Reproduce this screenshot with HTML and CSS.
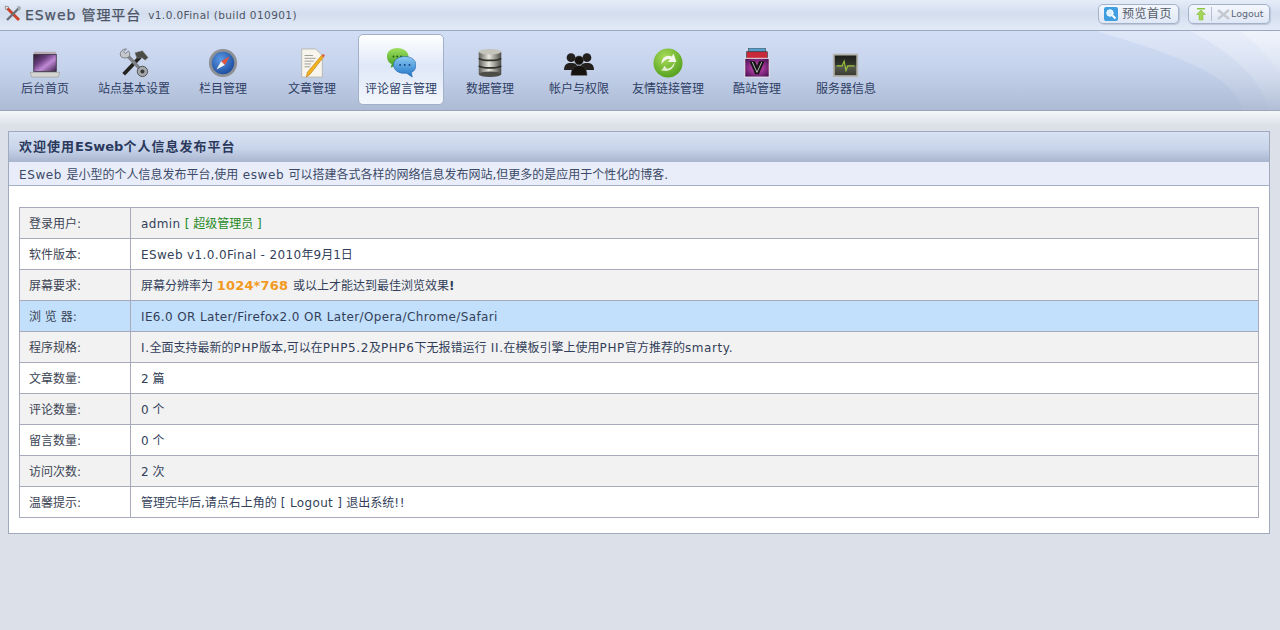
FILE: index.html
```html
<!DOCTYPE html>
<html lang="zh-CN">
<head>
<meta charset="utf-8">
<title>ESweb 管理平台</title>
<link rel="stylesheet" href="styles.css">
</head>
<body>
<svg class="defs" width="0" height="0" aria-hidden="true">
  <defs>
    <linearGradient id="gScreen" x1="0" y1="0" x2="1" y2="1"><stop offset="0" stop-color="#2c1c34"/><stop offset=".35" stop-color="#6c3f82"/><stop offset=".6" stop-color="#c08ad6"/><stop offset="1" stop-color="#3c2046"/></linearGradient>
    <linearGradient id="gGreen" x1="0" y1="0" x2="0" y2="1"><stop offset="0" stop-color="#9fe060"/><stop offset="1" stop-color="#3f9a20"/></linearGradient>
    <linearGradient id="gBlue" x1="0" y1="0" x2="0" y2="1"><stop offset="0" stop-color="#8ccaf2"/><stop offset="1" stop-color="#1f73c8"/></linearGradient>
    <linearGradient id="gDisk" x1="0" y1="0" x2="1" y2="0"><stop offset="0" stop-color="#5f5f5a"/><stop offset=".45" stop-color="#e8e8de"/><stop offset="1" stop-color="#4c4c47"/></linearGradient>
    <linearGradient id="gSwoosh" x1="0" y1="0" x2="0" y2="1"><stop offset="0" stop-color="#fff" stop-opacity=".3"/><stop offset="1" stop-color="#fff" stop-opacity=".02"/></linearGradient>
    <linearGradient id="gMonitor" x1="0" y1="0" x2="0" y2="1"><stop offset="0" stop-color="#1c1e1a"/><stop offset=".5" stop-color="#34382e"/><stop offset=".52" stop-color="#5a5e50"/><stop offset="1" stop-color="#3a3c34"/></linearGradient>
    <radialGradient id="gCompass" cx=".4" cy=".35" r=".7"><stop offset="0" stop-color="#5a9ae6"/><stop offset="1" stop-color="#1c4a9c"/></radialGradient>
    <radialGradient id="gLink" cx=".4" cy=".3" r=".8"><stop offset="0" stop-color="#a8dc58"/><stop offset="1" stop-color="#4b9a18"/></radialGradient>
    <radialGradient id="gCool" cx=".5" cy=".5" r=".65"><stop offset="0" stop-color="#e050c8"/><stop offset="1" stop-color="#45104f"/></radialGradient>
  </defs>
</svg>
<header class="topbar">
  <div class="brand">
    <svg class="logo" width="20" height="20" viewBox="0 0 20 20"><path d="M3 3l13 13" stroke="#c8442c" stroke-width="3"/><path d="M17 3L4 16" stroke="#6a7078" stroke-width="2.4"/><path d="M2 2l4 1-3 3z" fill="#e8e8e8" stroke="#777" stroke-width=".6"/><path d="M14 2l4 1-1 4-2-2z" fill="#aab0b8"/></svg>
    <span class="brand-name">ESweb 管理平台</span>
    <span class="brand-ver">v1.0.0Final (build 010901)</span>
  </div>
  <div class="top-actions">
    <a class="pill pill-preview">
      <svg width="14" height="14" viewBox="0 0 14 14"><rect width="14" height="14" rx="2" fill="#3f9fe0"/><circle cx="6" cy="6" r="3.2" fill="#d8f0ff" stroke="#fff"/><path d="M8.5 8.5l3 3" stroke="#fff" stroke-width="2"/></svg>
      <span>预览首页</span>
    </a>
    <a class="pill pill-logout">
      <svg width="10" height="14" viewBox="0 0 10 14"><path d="M1 1h8v1.500H1z" fill="#8cc63f"/><path d="M5 3l4.500 4.500H7V13H3V7.500H.5z" fill="#a5d65a" stroke="#7cb030" stroke-width=".5"/></svg>
      <i class="pill-sep"></i>
      <svg width="13" height="11" viewBox="0 0 13 11"><path d="M1 1l11 9M12 1L1 10" stroke="#c4c9d0" stroke-width="2.400"/></svg>
      <span class="logout-text">Logout</span>
    </a>
  </div>
</header>
<nav class="nav">
  <svg class="swoosh" width="240" height="80" viewBox="0 0 240 80" preserveAspectRatio="none">
    <path d="M57 0C120 20 195 40 203 80H240V0z" fill="url(#gSwoosh)"/>
    <path d="M150 0C190 20 225 50 228 80H240V0z" fill="url(#gSwoosh)"/>
    <path d="M200 0C215 12 235 30 240 45V0z" fill="url(#gSwoosh)"/>
  </svg>
  <a class="nav-item">
    <svg class="nav-icon" viewBox="0 0 32 32"><path d="M4 4h24v3H4z" fill="#b8a8b4"/><rect x="4" y="7" width="24" height="18" fill="url(#gScreen)" stroke="#2c2630" stroke-width=".8"/><path d="M0 26h32l-2 5H2z" fill="#d4d4d0" stroke="#8c8c88" stroke-width=".5"/></svg>
    <span>后台首页</span>
  </a>
  <a class="nav-item">
    <svg class="nav-icon" viewBox="0 0 32 32"><path d="M23 9L5 28" stroke="#22221f" stroke-width="4"/><path d="M17 5l8-2 6 7-3 3-4-3-5 1z" fill="#4a4a46" stroke="#8a8a84" stroke-width=".5"/><path d="M9 8l17 18" stroke="#7e8288" stroke-width="3.600"/><path d="M8 1C3 1 0 5 2 9c2 2 5 2 8 1 2-2 2-5 0-7L7 6 5 4z" fill="#c4c8cc" stroke="#5c5c5c" stroke-width=".7"/><circle cx="25" cy="25" r="5.500" fill="#a4a8ac" stroke="#4c4c4c"/><circle cx="25" cy="25" r="2.200" fill="#3a3a3a"/></svg>
    <span>站点基本设置</span>
  </a>
  <a class="nav-item">
    <svg class="nav-icon" viewBox="0 0 32 32"><circle cx="16" cy="16" r="15" fill="#8d9094"/><circle cx="16" cy="16" r="12" fill="url(#gCompass)"/><path d="M23 9l-9 5 4 4z" fill="#e8523a"/><path d="M9 23l9-5-4-4z" fill="#f2f2f2"/></svg>
    <span>栏目管理</span>
  </a>
  <a class="nav-item">
    <svg class="nav-icon" viewBox="0 0 32 32"><path d="M5 1h15l7 7v23H5z" fill="#f7f5ec" stroke="#b8b8ae"/><path d="M8 8h9M8 11h12M8 14h10M8 17h7M8 20h6" stroke="#9a9a92"/><path d="M28 10L14 28l-4 3 1-5L26 8z" fill="#f2b21f" stroke="#b4720c" stroke-width=".6"/><path d="M26 8l2 2 2-2-2-2z" fill="#d86a4a"/></svg>
    <span>文章管理</span>
  </a>
  <a class="nav-item is-active">
    <svg class="nav-icon" viewBox="0 0 32 32"><path d="M12 0C5 0 1 4 1 9c0 4 2 7 5 8l-1 4 6-3h3c6 0 10-4 10-9s-5-9-12-9z" fill="url(#gGreen)"/><circle cx="8" cy="9" r="1" fill="#1f5c10"/><circle cx="12" cy="9" r="1" fill="#1f5c10"/><circle cx="16" cy="9" r="1" fill="#1f5c10"/><path d="M20 9c-7 0-12 4-12 9s5 9 11 9h3l6 4-1-5c3-1 5-4 5-8 0-5-5-9-12-9z" fill="url(#gBlue)" stroke="#1d5fa8" stroke-width=".6"/><circle cx="15" cy="18" r="1" fill="#0e3d78"/><circle cx="20" cy="18" r="1" fill="#0e3d78"/><circle cx="25" cy="18" r="1" fill="#0e3d78"/></svg>
    <span>评论留言管理</span>
  </a>
  <a class="nav-item">
    <svg class="nav-icon" viewBox="0 0 32 32"><rect x="4" y="4" width="24" height="24" fill="url(#gDisk)"/><ellipse cx="16" cy="4" rx="12" ry="3" fill="#c4c4ba"/><path d="M4 11c4 3 20 3 24 0M4 19c4 3 20 3 24 0" stroke="#30302c" stroke-width="1.800" fill="none"/><ellipse cx="16" cy="28" rx="12" ry="3" fill="#4e4e48"/></svg>
    <span>数据管理</span>
  </a>
  <a class="nav-item">
    <svg class="nav-icon" viewBox="0 0 34 32"><g fill="#23201e"><circle cx="8" cy="10" r="5"/><path d="M0 24c0-6 3-8 8-8s8 2 8 8z"/><circle cx="26" cy="10" r="5"/><path d="M18 24c0-6 3-8 8-8s8 2 8 8z"/></g><g fill="#151210" stroke="#4a4642" stroke-width=".6"><circle cx="17" cy="13" r="5"/><path d="M8 30c0-8 4-11 9-11s9 3 9 11z"/></g></svg>
    <span>帐户与权限</span>
  </a>
  <a class="nav-item">
    <svg class="nav-icon" viewBox="0 0 32 32"><circle cx="16" cy="16" r="15.500" fill="url(#gLink)"/><path d="M9 17C9 10 15 7 20 9l2-3 3 9-9 0 2-3c-4-1-6 2-9 5z" fill="#f4f8ea"/><path d="M23 15c0 7-6 11-13 9l-2 0 0 0c2-1 3-2 4-5l3 3c4 0 6-3 8-7z" fill="#e4eed4"/></svg>
    <span>友情链接管理</span>
  </a>
  <a class="nav-item">
    <svg class="nav-icon" viewBox="0 0 32 32"><rect x="7" y="0" width="18" height="6" fill="#5a9ec8" stroke="#333" stroke-width=".6"/><rect x="5" y="4" width="22" height="8" fill="#c82a3a" stroke="#222" stroke-width=".6"/><rect x="3" y="11" width="26" height="20" fill="url(#gCool)" stroke="#f0f0f0"/><path d="M8 14h6l2 5 2-5h6l-6 14h-4z" fill="#151515"/><path d="M11 15l5 11 5-11" fill="none" stroke="#e8e8e8" stroke-width=".8"/></svg>
    <span>酷站管理</span>
  </a>
  <a class="nav-item">
    <svg class="nav-icon" viewBox="0 0 32 32"><rect x="2" y="6" width="27" height="25" fill="#b4b4ac"/><rect x="4" y="8" width="23" height="21" fill="url(#gMonitor)"/><path d="M6 19h6l2-5 2 10 2-5h7" fill="none" stroke="#9ac43a" stroke-width="1.200"/></svg>
    <span>服务器信息</span>
  </a>
</nav>
<div class="nav-shadow"></div>
<main class="panel">
  <h1 class="panel-title">欢迎使用<span class="title-en">ESweb</span>个人信息发布平台</h1>
  <p class="panel-sub"><span class="en-wide">ESweb </span>是小型的个人信息发布平台,使用<span class="en-wide"> esweb </span>可以搭建各式各样的网络信息发布网站,但更多的是应用于个性化的博客.</p>
  <div class="panel-body">
    <table class="info">
      <tr><th>登录用户:</th><td><span class="en">admin </span><span class="green">[ 超级管理员 ]</span></td></tr>
      <tr><th>软件版本:</th><td><span class="en">ESweb v1.0.0Final - 2010</span>年9月1日</td></tr>
      <tr><th>屏幕要求:</th><td>屏幕分辨率为 <b class="orange">1024*768</b> 或以上才能达到最佳浏览效果<b>!</b></td></tr>
      <tr class="hover"><th>浏 览 器:</th><td><span class="en">IE6.0 OR Later/Firefox2.0 OR Later/Opera/Chrome/Safari</span></td></tr>
      <tr><th>程序规格:</th><td><span class="en-wide">I.</span>全面支持最新的<span class="en-wide">PHP</span>版本,可以在<span class="en-wide">PHP5.2</span>及<span class="en-wide">PHP6</span>下无报错运行<span class="en-wide"> II.</span>在模板引擎上使用<span class="en-wide">PHP</span>官方推荐的<span class="en-wide">smarty.</span></td></tr>
      <tr><th>文章数量:</th><td>2 篇</td></tr>
      <tr><th>评论数量:</th><td>0 个</td></tr>
      <tr><th>留言数量:</th><td>0 个</td></tr>
      <tr><th>访问次数:</th><td>2 次</td></tr>
      <tr><th>温馨提示:</th><td>管理完毕后,请点右上角的 <span class="en">[ Logout ]</span> 退出系统<span class="en-wide">!!</span></td></tr>
    </table>
  </div>
</main>
</body>
</html>
```
FILE: styles.css
```css
* { box-sizing: border-box; }
html, body { margin: 0; padding: 0; }
body {
  height: 630px;
  overflow: hidden;
  background: #dbe0e9;
  color: #2e3d5c;
  font: 12px/18px "DejaVu Sans", "Noto Sans CJK SC", sans-serif;
}
.defs { position: absolute; }
.topbar {
  height: 31px;
  display: flex;
  justify-content: space-between;
  align-items: flex-start;
  padding: 4px 10px 0 3px;
  background: linear-gradient(#e5edf9 0, #d3dded 45%, #e3ebf8 100%);
  border-bottom: 1px solid #9aa6bd;
}
.brand { display: flex; align-items: center; height: 22px; }
.logo { margin: -2px 2px 0 0; }
.brand-name {
  font-size: 14px;
  color: #4c5566;
  letter-spacing: .9px;
  -webkit-text-stroke: .25px #4c5566;
}
.brand-ver { font-size: 10.500px; color: #4c5566; margin-left: 7px; letter-spacing: .42px; }
.top-actions { display: flex; gap: 9px; }
.pill {
  height: 20px;
  display: flex;
  align-items: center;
  border: 1px solid #a3b1c9;
  border-radius: 5px;
  background: linear-gradient(#f4f7fd, #dfe7f5);
  box-shadow: 1px 1px 1px #bcc6d6;
  color: #555c68;
}
.pill-preview { width: 81px; padding-left: 5px; gap: 4px; letter-spacing: .5px; }
.pill-logout { width: 82px; padding-left: 7px; }
.pill-sep { width: 1px; height: 14px; background: #b6c0d0; margin: 0 5px; }
.logout-text { font: 9.500px/1 "DejaVu Sans", sans-serif; margin-left: 1px; color: #5d6675; }
.nav {
  position: relative;
  height: 80px;
  display: flex;
  gap: 3px;
  padding: 3px 0 0 2px;
  background: linear-gradient(#d2def5 0, #c6d3ec 45%, #aebbd4 100%);
  border-bottom: 1px solid #9ba5b8;
}
.swoosh { position: absolute; right: 0; top: 0; pointer-events: none; }
.nav-item {
  position: relative;
  width: 86px;
  height: 71px;
  display: flex;
  flex-direction: column;
  align-items: center;
  padding-top: 13px;
  color: #2f3f66;
  line-height: 16px;
  white-space: nowrap;
  border: 1px solid transparent;
  border-radius: 5px;
}
.nav-icon { width: 30px; height: 30px; margin-bottom: 3px; flex: none; }
.is-active {
  border-color: #a2b0ca;
  background: linear-gradient(#ffffff 0, #dfe8f8 45%, #f3f6fc 100%);
}
.nav-shadow {
  height: 14px;
  background: linear-gradient(#f6f7f9, #dde1ea);
}
.panel {
  margin: 6px 10px 0 8px;
  height: 403px;
  border: 1px solid #a0aabd;
  background: #fff;
}
.panel-title {
  margin: 0;
  height: 30px;
  padding: 6px 10px 0;
  font-size: 13px;
  line-height: 18px;
  font-weight: 700;
  letter-spacing: 1px;
  color: #2b3a5c;
  background: linear-gradient(#d8e2f4 0, #c8d4ea 55%, #a9b6cf 100%);
}
.title-en { letter-spacing: 0; }
.panel-sub {
  margin: 0;
  height: 24px;
  padding: 4px 10px 0;
  line-height: 18px;
  white-space: nowrap;
  color: #3c4a68;
  background: #e8edf9;
  border-bottom: 1px solid #a6b1c7;
}
.en { letter-spacing: .37px; }
.en-wide { letter-spacing: .6px; }
.panel-body { padding: 21px 10px 0; }
.info {
  width: 100%;
  border-collapse: collapse;
  table-layout: fixed;
}
.info th, .info td {
  height: 31px;
  padding: 2px 10px 0;
  border: 1px solid #a6aaba;
  font-weight: 400;
  text-align: left;
  white-space: nowrap;
  color: #333f5a;
}
.info th { width: 111px; padding-left: 9px; color: #3c4454; }
.info b { font-weight: 700; }
.info tr:nth-child(odd) { background: #f2f2f2; }
.info tr.hover { background: #c2e0fb; }
.green { color: #1f8a1f; }
.orange { color: #f29a1f; font-size: 13px; letter-spacing: .15px; margin-right: 1px; }
```
